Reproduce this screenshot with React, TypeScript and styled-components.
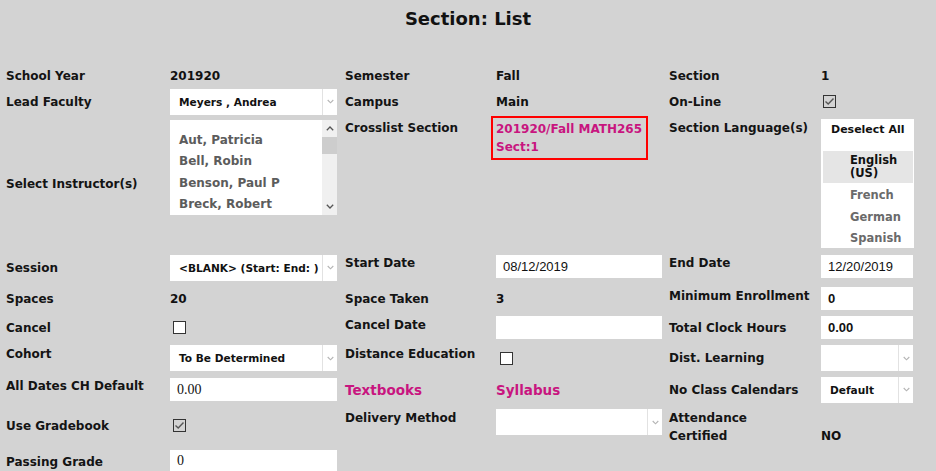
import React from 'react';
import styled, { createGlobalStyle } from 'styled-components';

const Global = createGlobalStyle`
  html, body { margin: 0; padding: 0; background: #d3d3d3; }
  body { font-family: "DejaVu Sans", "Liberation Sans", sans-serif; color: #111; }
  * { box-sizing: border-box; }
`;

const Page = styled.div`
  width: 936px;
  height: 471px;
  overflow: hidden;
  background: #d3d3d3;
`;

const Title = styled.h1`
  margin: 0;
  height: 64px;
  padding-top: 8px;
  text-align: center;
  font-size: 18px;
  line-height: 22px;
  font-weight: bold;
  color: #111;
`;

const Form = styled.div`
  display: grid;
  grid-template-columns: 164px 175px 151px 173px 152px 1fr;
  grid-template-rows: 23px 29px 135px 33px 29px 29px 32px 31px 41px 25px;
  padding-left: 6px;
`;

type V = 'top' | 'middle' | 'bottom';

const Cell = styled.div<{ $v?: V; $pt?: number; $pb?: number }>`
  display: flex;
  flex-direction: column;
  align-items: flex-start;
  justify-content: ${(p) => (p.$v === 'top' ? 'flex-start' : p.$v === 'bottom' ? 'flex-end' : 'center')};
  padding-top: ${(p) => p.$pt ?? 0}px;
  padding-bottom: ${(p) => p.$pb ?? 0}px;
  min-width: 0;
`;

const Label = styled.div`
  font-size: 12px;
  line-height: 16px;
  font-weight: bold;
  color: #141414;
  white-space: nowrap;
`;

const TallLabel = styled(Label)`
  line-height: 18px;
`;

const Value = styled.div`
  font-size: 12px;
  line-height: 16px;
  font-weight: bold;
  color: #111;
  white-space: nowrap;
`;

const TallValue = styled(Value)`
  line-height: 18px;
`;

const Link = styled.a`
  font-size: 13.5px;
  line-height: 18px;
  font-weight: bold;
  color: #c8157f;
  text-decoration: none;
  white-space: nowrap;
`;

const Crosslist = styled.div`
  margin-left: -5px;
  width: 157px;
  border: 2px solid #ff0000;
  padding: 2px 3px 2px 3px;
  font-size: 12px;
  line-height: 18px;
  font-weight: bold;
  color: #c8157f;
`;

const SelectBox = styled.div<{ $w: number }>`
  width: ${(p) => p.$w}px;
  height: 26px;
  background: #fff;
  display: flex;
  align-items: stretch;
`;

const SelectText = styled.div`
  flex: 1;
  padding-left: 9px;
  display: flex;
  align-items: center;
  font-size: 10.6px;
  font-weight: bold;
  color: #111;
  white-space: nowrap;
  overflow: hidden;
`;

const SelectArrow = styled.div`
  width: 15px;
  border-left: 1px solid #e2e2e2;
  display: flex;
  align-items: center;
  justify-content: center;
`;

const TextInput = styled.div<{ $w: number; $serif?: boolean; $bold?: boolean }>`
  width: ${(p) => p.$w}px;
  height: 23px;
  background: #fff;
  padding-left: 7px;
  display: flex;
  align-items: center;
  font-family: ${(p) => (p.$serif ? '"Liberation Serif", serif' : '"Liberation Sans", sans-serif')};
  font-size: ${(p) => (p.$serif ? '14px' : '13px')};
  font-weight: ${(p) => (p.$bold ? 'bold' : 'normal')};
  color: #111;
`;

const Check = styled.span<{ $checked?: boolean; $ml?: number }>`
  width: 13px;
  height: 13px;
  margin-left: ${(p) => p.$ml ?? 3}px;
  border: 1px solid #333;
  background: ${(p) => (p.$checked ? 'transparent' : '#fff')};
  display: flex;
  align-items: center;
  justify-content: center;
`;

const ListBox = styled.div`
  width: 167px;
  height: 95px;
  background: #fff;
  display: flex;
`;

const ListItems = styled.div`
  flex: 1;
  padding: 10px 0 0 9px;
  overflow: hidden;
`;

const ListItem = styled.div`
  font-size: 12px;
  line-height: 21.3px;
  font-weight: bold;
  color: #5c5c5c;
  white-space: nowrap;
`;

const Scrollbar = styled.div`
  width: 15px;
  background: #f0f0f0;
  display: flex;
  flex-direction: column;
  align-items: stretch;
`;

const ScrollBtn = styled.div`
  height: 17px;
  display: flex;
  align-items: center;
  justify-content: center;
`;

const Thumb = styled.div`
  height: 17px;
  background: #cdcdcd;
`;

const ScrollTrack = styled.div`
  flex: 1;
`;

const LangBox = styled.div`
  width: 93px;
  height: 129px;
  background: #fff;
  padding: 3px 1px 0 2px;
`;

const Deselect = styled.div`
  margin-left: 8px;
  margin-bottom: 13px;
  font-size: 11px;
  line-height: 16px;
  font-weight: bold;
  color: #111;
`;

const LangItem = styled.div<{ $selected?: boolean }>`
  padding: ${(p) => (p.$selected ? '3px 0 3px 27px' : '0 0 0 27px')};
  background: ${(p) => (p.$selected ? '#e5e5e5' : 'transparent')};
  font-size: 11.5px;
  line-height: ${(p) => (p.$selected ? '13px' : '21.5px')};
  font-weight: bold;
  color: ${(p) => (p.$selected ? '#111' : '#6a6a6a')};
`;

const LangList = styled.div`
  padding-top: 2px;
`;

const Chevron = ({ up, color = '#b5b5b5', size = 7 }: { up?: boolean; color?: string; size?: number }) => (
  <svg width={size} height={Math.ceil(size / 2) + 1} viewBox="0 0 8 5">
    <path d={up ? 'M0.8 4.2 L4 1 L7.2 4.2' : 'M0.8 0.8 L4 4 L7.2 0.8'} fill="none" stroke={color} strokeWidth="1.3" />
  </svg>
);

const Tick = () => (
  <svg width="11" height="9" viewBox="0 0 11 9">
    <path d="M1.5 4.5 L4.2 7 L9.5 1.5" fill="none" stroke="#555" strokeWidth="1.4" />
  </svg>
);

const Select = ({ w, text }: { w: number; text?: string }) => (
  <SelectBox $w={w}>
    <SelectText>{text}</SelectText>
    <SelectArrow>
      <Chevron />
    </SelectArrow>
  </SelectBox>
);

export default function App() {
  return (
    <Page>
      <Global />
      <Title>Section: List</Title>
      <Form>
        {/* Row 1 */}
        <Cell><Label>School Year</Label></Cell>
        <Cell><Value>201920</Value></Cell>
        <Cell><Label>Semester</Label></Cell>
        <Cell><Value>Fall</Value></Cell>
        <Cell><Label>Section</Label></Cell>
        <Cell><Value>1</Value></Cell>

        {/* Row 2 */}
        <Cell><Label>Lead Faculty</Label></Cell>
        <Cell><Select w={167} text="Meyers , Andrea" /></Cell>
        <Cell><Label>Campus</Label></Cell>
        <Cell><Value>Main</Value></Cell>
        <Cell><Label>On-Line</Label></Cell>
        <Cell><Check $checked $ml={2}><Tick /></Check></Cell>

        {/* Row 3 */}
        <Cell><Label>Select Instructor(s)</Label></Cell>
        <Cell $v="top" $pt={4}>
          <ListBox>
            <ListItems>
              <ListItem>Aut, Patricia</ListItem>
              <ListItem>Bell, Robin</ListItem>
              <ListItem>Benson, Paul P</ListItem>
              <ListItem>Breck, Robert</ListItem>
            </ListItems>
            <Scrollbar>
              <ScrollBtn><Chevron up color="#555" size={8} /></ScrollBtn>
              <Thumb />
              <ScrollTrack />
              <ScrollBtn><Chevron color="#555" size={8} /></ScrollBtn>
            </Scrollbar>
          </ListBox>
        </Cell>
        <Cell $v="top" $pt={4}><Label>Crosslist Section</Label></Cell>
        <Cell $v="top" $pt={0}>
          <Crosslist>
            201920/Fall MATH265
            <br />
            Sect:1
          </Crosslist>
        </Cell>
        <Cell $v="top" $pt={4}><Label>Section Language(s)</Label></Cell>
        <Cell $v="top" $pt={3}>
          <LangBox>
            <Deselect>Deselect All</Deselect>
            <LangItem $selected>English<br />(US)</LangItem>
            <LangList>
              <LangItem>French</LangItem>
              <LangItem>German</LangItem>
              <LangItem>Spanish</LangItem>
            </LangList>
          </LangBox>
        </Cell>

        {/* Row 4 */}
        <Cell><Label>Session</Label></Cell>
        <Cell><Select w={167} text="<BLANK> (Start: End: )" /></Cell>
        <Cell $v="top" $pt={4}><Label>Start Date</Label></Cell>
        <Cell $v="top" $pt={4}><TextInput $w={166}>08/12/2019</TextInput></Cell>
        <Cell $v="top" $pt={4}><Label>End Date</Label></Cell>
        <Cell $v="top" $pt={4}><TextInput $w={92}>12/20/2019</TextInput></Cell>

        {/* Row 5 */}
        <Cell><Label>Spaces</Label></Cell>
        <Cell><Value>20</Value></Cell>
        <Cell><Label>Space Taken</Label></Cell>
        <Cell><Value>3</Value></Cell>
        <Cell $v="top" $pt={4}><Label>Minimum Enrollment</Label></Cell>
        <Cell><TextInput $w={92} $bold>0</TextInput></Cell>

        {/* Row 6 */}
        <Cell><Label>Cancel</Label></Cell>
        <Cell><Check /></Cell>
        <Cell $v="top" $pt={4}><Label>Cancel Date</Label></Cell>
        <Cell><TextInput $w={166} /></Cell>
        <Cell><Label>Total Clock Hours</Label></Cell>
        <Cell><TextInput $w={92} $bold>0.00</TextInput></Cell>

        {/* Row 7 */}
        <Cell $v="top" $pt={4}><Label>Cohort</Label></Cell>
        <Cell><Select w={167} text="To Be Determined" /></Cell>
        <Cell $v="top" $pt={4}><Label>Distance Education</Label></Cell>
        <Cell><Check $ml={4} /></Cell>
        <Cell><Label>Dist. Learning</Label></Cell>
        <Cell><Select w={92} /></Cell>

        {/* Row 8 */}
        <Cell $v="top" $pt={4}><Label>All Dates CH Default</Label></Cell>
        <Cell><TextInput $w={167} $serif>0.00</TextInput></Cell>
        <Cell><Link href="#">Textbooks</Link></Cell>
        <Cell><Link href="#">Syllabus</Link></Cell>
        <Cell><Label>No Class Calendars</Label></Cell>
        <Cell><Select w={92} text="Default" /></Cell>

        {/* Row 9 */}
        <Cell><Label>Use Gradebook</Label></Cell>
        <Cell><Check $checked><Tick /></Check></Cell>
        <Cell $v="top" $pt={5}><Label>Delivery Method</Label></Cell>
        <Cell $v="top" $pt={4}><Select w={166} /></Cell>
        <Cell $v="top" $pt={4}><TallLabel>Attendance<br />Certified</TallLabel></Cell>
        <Cell $v="bottom" $pb={1}><TallValue>NO</TallValue></Cell>

        {/* Row 10 */}
        <Cell $v="top" $pt={8}><Label>Passing Grade</Label></Cell>
        <Cell $v="top" $pt={4}><TextInput $w={167} $serif>0</TextInput></Cell>
        <Cell />
        <Cell />
        <Cell />
        <Cell />
      </Form>
    </Page>
  );
}
